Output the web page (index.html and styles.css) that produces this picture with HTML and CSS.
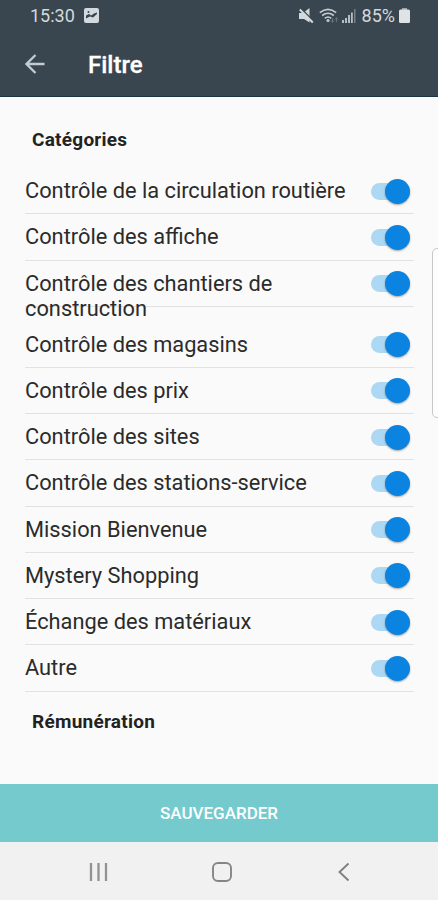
FILE: index.html
```
<!DOCTYPE html>
<html lang="fr">
<head>
<meta charset="utf-8">
<meta name="viewport" content="width=device-width, initial-scale=1">
<title>Filtre</title>
<link rel="stylesheet" href="styles.css">
</head>
<body>
<div class="screen">

	<header class="header">
		<div class="status">
			<span class="time">15:30</span>
			<svg class="photo" width="15" height="15" viewBox="0 0 15 15"><rect width="15" height="15" rx="2" fill="#d3d9dd"/><path d="M2 10.5V7.500l3-1.500 2.200 1.500L10 5.500l3-1v1.500L9 9.500 6 8.500z" fill="#39464f"/><circle cx="4.500" cy="4" r="1" fill="#39464f"/></svg>
			<span class="status-right">
				<svg class="mute" width="15" height="16" viewBox="0 0 15 16"><path d="M0 5h4L10.500 0v14.500L5 11H0z" fill="#d3d9dd"/><path d="M2 .5l13 13" stroke="#39464f" stroke-width="1.500"/><path d="M.8 1.500l13 13" stroke="#d3d9dd" stroke-width="2"/></svg>
				<svg class="wifi" width="20" height="16" viewBox="0 0 20 16"><g fill="none" stroke="#c5cdd2" stroke-width="1.600"><path d="M.8 4.600q8.200-6.600 16.400 0"/><path d="M3.200 7.500q5.800-4.600 11.600 0"/><path d="M5.800 10.300q3.200-2.600 6.400 0"/></g><circle cx="9" cy="12.500" r="1.500" fill="#c5cdd2"/><path d="M13.500 10v4M12 12.500l1.500 2 1.500-2M17.500 14v-4M16 11.500l1.500-2 1.500 2" fill="none" stroke="#65727b"/></svg>
				<svg class="signal" width="14" height="14" viewBox="0 0 14 14"><path d="M0 11h2v3H0zM3 9h2v5H3zM6 6h2v8H6zM9 3.500h1.800V14H9z" fill="#b4bdc3"/><path d="M12 0h1.500v14H12z" fill="#74808a"/></svg>
				<span class="battery-text">85%</span>
				<svg class="battery" width="11" height="15" viewBox="0 0 11 15"><path d="M3 0h5v2H3z" fill="#9aa4ab"/><rect y="1.500" width="11" height="13.500" rx="1.500" fill="#dfe3e6"/></svg>
			</span>
		</div>
		<div class="toolbar">
			<svg class="back" width="20" height="20" viewBox="0 0 20 20"><path d="M19.500 10H2M10.500 1L1.500 10l9 9" fill="none" stroke="#c3cad0" stroke-width="2.300"/></svg>
			<h1 class="title">Filtre</h1>
		</div>
	</header>

	<main class="content">
		<h2 class="section">Catégories</h2>
		<ul class="list">
			<li class="item"><span class="label">Contrôle de la circulation routière</span><span class="switch"></span></li>
			<li class="item"><span class="label">Contrôle des affiche</span><span class="switch"></span></li>
			<li class="item item-long"><span class="label">Contrôle des chantiers de<br>construction</span><span class="switch"></span></li>
			<li class="item"><span class="label">Contrôle des magasins</span><span class="switch"></span></li>
			<li class="item"><span class="label">Contrôle des prix</span><span class="switch"></span></li>
			<li class="item"><span class="label">Contrôle des sites</span><span class="switch"></span></li>
			<li class="item"><span class="label">Contrôle des stations-service</span><span class="switch"></span></li>
			<li class="item"><span class="label">Mission Bienvenue</span><span class="switch"></span></li>
			<li class="item"><span class="label">Mystery Shopping</span><span class="switch"></span></li>
			<li class="item"><span class="label">Échange des matériaux</span><span class="switch"></span></li>
			<li class="item"><span class="label">Autre</span><span class="switch"></span></li>
		</ul>
		<h2 class="section">Rémunération</h2>
	</main>

	<button class="save" type="button">SAUVEGARDER</button>

	<nav class="nav">
		<svg width="20" height="20" viewBox="0 0 20 20"><path d="M2 1v18M9.500 1v18M17 1v18" stroke="#929292" stroke-width="2.300"/></svg>
		<svg width="20" height="20" viewBox="0 0 20 20"><rect x="1" y="1" width="18" height="18" rx="5" fill="none" stroke="#858585" stroke-width="1.900"/></svg>
		<svg width="20" height="20" viewBox="0 0 20 20"><path d="M14.500 1.500L5.500 10l9 8.500" fill="none" stroke="#808080" stroke-width="1.900"/></svg>
	</nav>

	<!-- edge panel handle -->
	<div class="edge"></div>
</div>
</body>
</html>
```

FILE: styles.css
```
* {
	box-sizing: border-box;
}

body {
	margin: 0;
	font-family: Roboto, "Liberation Sans", sans-serif;
	background: #fafafa;
}

.screen {
	position: relative;
	display: flex;
	flex-direction: column;
	height: 900px;
	overflow: hidden;
}

/* header */
.header {
	height: 97px;
	background: #39464f;
	border-bottom: 1px solid #1d3441;
	color: #fff;
}

.status {
	display: flex;
	align-items: center;
	height: 31px;
	padding: 0 28px 0 30px;
	color: #d3d9dd;
	font-size: 18px;
}

.photo {
	margin-left: 9px;
}

.status-right {
	display: flex;
	align-items: center;
	margin-left: auto;
}

.wifi {
	margin-left: 5px;
}

.signal {
	margin: 1px 6px 0 3px;
}

.battery {
	margin-left: 4px;
}

.toolbar {
	display: flex;
	align-items: center;
	height: 66px;
	padding-left: 25px;
}

.title {
	margin: 2px 0 0 43px;
	font-size: 24px;
	font-weight: 500;
	-webkit-text-stroke: 0.3px #fff;
}

/* categories */
.content {
	flex: 1;
	padding: 30px 24px 0 25px;
}

.section {
	margin: 0 0 0 7px;
	height: 41px;
	color: #222;
	font-size: 19px;
	font-weight: 700;
	line-height: 26px;
	letter-spacing: 0.25px;
}

.list {
	margin: 0 0 17px;
	padding: 0;
	list-style: none;
}

.item {
	display: flex;
	justify-content: space-between;
	height: 46.250px;
	padding: 10px 4px 0 0;
	border-bottom: 1px solid #e2e2e2;
}

/* second line of the label runs over the divider */
.item-long {
	margin-bottom: 14.900px;
}

.label {
	color: #2b2b2b;
	font-size: 21.800px;
	line-height: 25.500px;
	white-space: nowrap;
}

.switch {
	display: flex;
	justify-content: flex-end;
	align-items: center;
	width: 39px;
	height: 17px;
	margin-top: 4.500px;
	border-radius: 9px;
	background: #acd8f3;
}

.switch::after {
	content: "";
	width: 25px;
	height: 25px;
	flex: none;
	border-radius: 50%;
	background: #0a84e0;
	box-shadow: 0 1px 2px rgba(0, 0, 0, 0.35);
}

/* bottom */
.save {
	height: 58px;
	border: 0;
	background: #74cacd;
	color: #fff;
	font-family: inherit;
	font-size: 17px;
	font-weight: 500;
}

.nav {
	display: flex;
	justify-content: space-between;
	align-items: center;
	height: 58px;
	padding: 2px 84px 0 89px;
	background: #f1f1f1;
}

.edge {
	position: absolute;
	top: 248px;
	right: -4px;
	width: 10px;
	height: 170px;
	border: 1px solid #c8c8c8;
	border-radius: 8px;
	background: #fdfdfd;
}
```
